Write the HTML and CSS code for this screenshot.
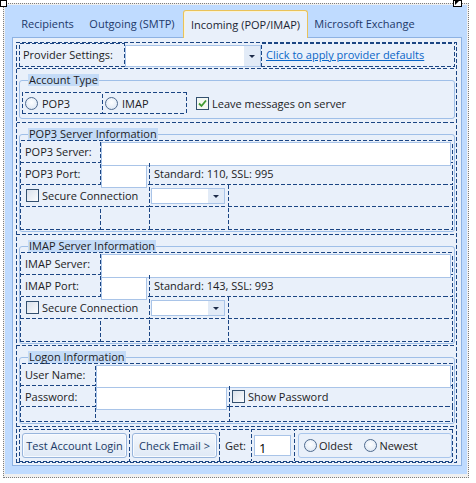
FILE: index.html
```html
<!DOCTYPE html>
<html lang="en">
<head>
    <meta charset="UTF-8">
    <title>Incoming (POP/IMAP)</title>
    <link rel="stylesheet" href="styles.css">
</head>
<body>
    <div class="surface">
        <span class="handle handle-tl"></span>
        <span class="handle handle-tr"><i></i></span>
        <div class="tabctl">
            <div class="tabstrip">
                <div class="tab tab-recipients">Recipients</div>
                <div class="tab tab-outgoing">Outgoing (SMTP)</div>
                <div class="tab tab-incoming active">Incoming (POP/IMAP)</div>
                <div class="tab tab-exchange">Microsoft Exchange</div>
            </div>
            <div class="page">
                <div class="layout dash">
                    <!-- provider -->
                    <div class="row row-provider dash">
                        <div class="provider-label dash">Provider Settings:</div>
                        <div class="combo combo-provider"><span class="combo-btn"><i></i></span></div>
                        <div class="provider-link dash"><a href="#">Click to apply provider defaults</a></div>
                    </div>

                    <!-- account type -->
                    <div class="row row-account dash">
                        <fieldset class="grp">
                            <legend>Account Type</legend>
                            <div class="acct-body">
                                <div class="opt-cell opt-pop dash"><span class="rad"></span>POP3</div>
                                <div class="opt-cell opt-imap dash"><span class="rad"></span>IMAP</div>
                                <div class="chk-line"><span class="chk checked"><svg width="11" height="11" viewBox="0 0 11 11"><path d="M2 5.5 L4.5 8 L9 2.5" fill="none" stroke="#3f9a2f" stroke-width="1.8"/></svg></span>Leave messages on server</div>
                            </div>
                        </fieldset>
                    </div>

                    <!-- pop3 -->
                    <div class="row row-pop dash">
                        <fieldset class="grp">
                            <legend>POP3 Server Information</legend>
                            <div class="srv-grid dash">
                                <div class="c dash">POP3 Server:</div>
                                <div class="c dash c-tb span3"><input class="tb tb-server" type="text"></div>
                                <div class="c dash">POP3 Port:</div>
                                <div class="c dash c-tb"><input class="tb tb-port" type="text"></div>
                                <div class="c dash span2">Standard: 110, SSL: 995</div>
                                <div class="c dash c-secure span2"><span class="chk"></span>Secure Connection</div>
                                <div class="c dash c-tb"><div class="combo combo-sm"><span class="combo-btn"><i></i></span></div></div>
                                <div class="c dash"></div>
                                <div class="c dash"></div>
                                <div class="c dash"></div>
                                <div class="c dash"></div>
                                <div class="c dash"></div>
                            </div>
                        </fieldset>
                    </div>

                    <!-- imap -->
                    <div class="row row-imap dash">
                        <fieldset class="grp">
                            <legend>IMAP Server Information</legend>
                            <div class="srv-grid dash">
                                <div class="c dash">IMAP Server:</div>
                                <div class="c dash c-tb span3"><input class="tb tb-server" type="text"></div>
                                <div class="c dash">IMAP Port:</div>
                                <div class="c dash c-tb"><input class="tb tb-port" type="text"></div>
                                <div class="c dash span2">Standard: 143, SSL: 993</div>
                                <div class="c dash c-secure span2"><span class="chk"></span>Secure Connection</div>
                                <div class="c dash c-tb"><div class="combo combo-sm"><span class="combo-btn"><i></i></span></div></div>
                                <div class="c dash"></div>
                                <div class="c dash"></div>
                                <div class="c dash"></div>
                                <div class="c dash"></div>
                                <div class="c dash"></div>
                            </div>
                        </fieldset>
                    </div>

                    <!-- logon -->
                    <div class="row row-logon dash">
                        <fieldset class="grp">
                            <legend>Logon Information</legend>
                            <div class="logon-grid dash">
                                <div class="c dash">User Name:</div>
                                <div class="c dash c-tb span2"><input class="tb tb-user" type="text"></div>
                                <div class="c dash">Password:</div>
                                <div class="c dash c-tb"><input class="tb tb-pass" type="password"></div>
                                <div class="c dash c-show"><span class="chk"></span>Show Password</div>
                                <div class="c dash"></div>
                                <div class="c dash"></div>
                                <div class="c dash"></div>
                            </div>
                        </fieldset>
                    </div>

                    <!-- actions -->
                    <div class="row row-actions">
                        <div class="btn-panel dash">
                            <div class="bc dash bc-test"><button class="btn btn-test" type="button">Test Account Login</button></div>
                            <div class="bc dash bc-check"><button class="btn btn-check" type="button">Check Email &gt;</button></div>
                            <div class="bc dash bc-get">Get:</div>
                            <div class="bc dash bc-count"><input class="tb tb-count" type="text" value="1"></div>
                            <div class="bc bc-order">
                                <div class="order-box">
                                    <span class="ropt"><span class="rad"></span>Oldest</span>
                                    <span class="ropt"><span class="rad"></span>Newest</span>
                                </div>
                            </div>
                        </div>
                    </div>
                </div>
            </div>
        </div>
    </div>
</body>
</html>
```

FILE: styles.css
```css
* {
    box-sizing: border-box;
}
body {
    margin: 0;
    background: #fff;
    font-family: "Open Sans", "Segoe UI", sans-serif;
    font-size: 11px;
    color: #1c1c24;
}
/* designer-style dashed outline, denser than the browser's dashed border */
.dash {
    border-color: #1b4583;
    border-style: solid;
    border-image: repeating-linear-gradient(45deg, #1b4583 0 2.83px, transparent 2.83px 4.243px) 1;
}
.surface {
    position: relative;
    margin: 3px 0 0 3px;
    width: 466px;
    height: 475px;
    border: 1px dotted #7d7d7d;
    padding: 1px;
    background: #f0f0f0;
}
.handle {
    position: absolute;
    top: -4px;
    height: 7px;
    background: #fff;
    border: 1px solid #000;
}
.handle-tl {
    left: -4px;
    width: 7px;
}
.handle-tr {
    left: 449px;
    width: 9px;
}
.handle-tr i {
    position: absolute;
    left: 1px;
    top: 0;
    border-left: 4px solid #000;
    border-bottom: 4px solid transparent;
}

/* tab control */
.tabctl {
    width: 462px;
    height: 469px;
    background: #bfdbff;
}
.tabstrip {
    display: flex;
    align-items: flex-end;
    height: 32px;
    padding-left: 9px;
}
.tab {
    height: 27px;
    line-height: 28px;
    text-align: center;
    color: #22396a;
    white-space: nowrap;
}
.tab-recipients { width: 67px; }
.tab-outgoing { width: 102px; }
.tab-incoming { width: 125px; }
.tab-exchange { width: 113px; }
.tab.active {
    position: relative;
    height: 28px;
    line-height: 27px;
    margin-bottom: -1px;
    background: #e9f0fa;
    border: 1px solid #e9c25a;
    border-bottom: 0;
    border-radius: 3px 3px 0 0;
    box-shadow: inset 1px 1px 0 #fbf3d6;
    color: #1a1f33;
}
.page {
    margin-left: 7px;
    width: 450px;
    height: 429px;
    background: #e9f0fa;
    border: 1px solid #8db2e3;
    padding: 4px 0 0 3px;
}

/* table layout panel */
.layout {
    width: 441px;
    border-width: 1px;
}
.row {
    display: flow-root;
    border-width: 0 0 1px 0;
}
.row-provider { height: 26px; display: flex; align-items: flex-start; padding-left: 2px; }
.row-account { height: 54px; }
.row-pop { height: 112px; }
.row-imap { height: 111px; }
.row-logon { height: 81px; }
.row-actions { height: 35px; }

.provider-label {
    width: 106px;
    height: 24px;
    border-width: 1px;
    padding-left: 3px;
    line-height: 22px;
    white-space: nowrap;
}
.provider-link {
    width: 194px;
    height: 24px;
    border-width: 1px;
    padding-left: 4px;
    line-height: 22px;
}
.provider-link a {
    color: #0a66c8;
}

.combo {
    position: relative;
    background: #fff;
    border: 1px solid #a9c4e8;
}
.combo-provider {
    width: 136px;
    height: 22px;
    margin-top: 2px;
}
.combo-btn {
    position: absolute;
    right: 0;
    top: 0;
    bottom: 0;
    width: 16px;
    background: #e2ebf7;
    display: flex;
    align-items: center;
    justify-content: center;
}
.combo-btn i {
    border-top: 3px solid #1c2b48;
    border-left: 3px solid transparent;
    border-right: 3px solid transparent;
}

/* group boxes */
.grp {
    margin: 5px 1px 0 2px;
    padding: 0;
    min-width: 0;
    border: 1px solid #9fbfe8;
    border-radius: 3px;
}
.grp legend {
    margin-left: 8px;
    padding: 0 1px;
    height: 12px;
    line-height: 12px;
    background: #c4dbf7;
    white-space: nowrap;
}

.acct-body {
    display: flex;
    align-items: center;
    margin: 6px 0 4px 2px;
}
.opt-cell {
    height: 22px;
    border-width: 1px;
    display: flex;
    align-items: center;
    padding-left: 2px;
}
.opt-pop { width: 81px; }
.opt-imap { width: 84px; border-left-width: 0; }
.chk-line {
    display: flex;
    align-items: center;
    margin-left: 9px;
}

.rad {
    display: inline-block;
    width: 13px;
    height: 13px;
    margin-right: 4px;
    border: 1px solid #4f6b8f;
    border-radius: 50%;
    background: radial-gradient(circle at 50% 40%, #fdfeff 0, #e7eef7 60%, #cfdced 100%);
    flex: none;
}
.chk {
    display: inline-flex;
    align-items: center;
    justify-content: center;
    width: 13px;
    height: 13px;
    margin-right: 3px;
    border: 1px solid #33506f;
    background: linear-gradient(135deg, #d9e1eb, #fbfcfe);
    flex: none;
}
.chk.checked {
    background: #f4f8f2;
}

/* server grids */
.srv-grid,
.logon-grid {
    display: grid;
    width: 433px;
    border-width: 1px 0 0 1px;
    margin-bottom: 1px;
}
.srv-grid {
    grid-template-columns: 80px 49px 79px 224px;
    grid-template-rows: 22px 22px 22px 23px;
}
.logon-grid {
    grid-template-columns: 75px 134px 223px;
    grid-template-rows: 22px 21px 15px;
}
.c {
    border-width: 0 1px 1px 0;
    display: flex;
    align-items: center;
    padding-left: 4px;
    white-space: nowrap;
}
.c-tb {
    padding-left: 0;
    align-items: flex-start;
}
.c-secure { padding-left: 5px; }
.c-show { padding-left: 2px; }
.span2 { grid-column: span 2; }
.span3 { grid-column: span 3; }

.tb {
    display: block;
    margin: 0;
    padding: 0 3px;
    border: 1px solid #a9c4e8;
    background: #fff;
    font: inherit;
    color: #000;
    flex: none;
}
.tb-server { width: 350px; height: 24px; margin-top: 1px; }
.tb-port { width: 46px; height: 23px; margin-top: 2px; }
.tb-user { width: 355px; height: 23px; margin-top: 1px; }
.tb-pass { width: 131px; height: 23px; margin-top: 1px; }
.combo-sm {
    width: 74px;
    height: 16px;
    margin: 3px 0 0 1px;
}

/* action buttons */
.btn-panel {
    display: flex;
    height: 33px;
    margin: 2px 3px 0 2px;
    border-width: 1px;
}
.bc {
    border-width: 0 1px 0 0;
    flex: none;
}
.bc-test { width: 110px; }
.bc-check { width: 90px; }
.bc-get { width: 32px; padding-left: 5px; display: flex; align-items: center; }
.bc-count { width: 43px; }
.bc-order { flex: 1; }
.btn {
    display: block;
    height: 25px;
    margin: 3px 0 0 2px;
    padding: 0;
    border: 1px solid #98b5dc;
    border-radius: 3px;
    background: linear-gradient(#f3f7fc, #dfe9f6);
    font: inherit;
    color: #203a66;
    box-shadow: inset 0 0 0 1px #f8fbff;
}
.btn-test { width: 105px; }
.btn-check { width: 85px; }
.tb-count {
    width: 37px;
    height: 21px;
    margin: 5px 0 0 2px;
    padding: 4px 0 0 4px;
    font-size: 13px;
    line-height: 15px;
}
.order-box {
    display: flex;
    align-items: center;
    width: 154px;
    height: 25px;
    margin: 3px 0 0 3px;
    padding-left: 5px;
    border: 1px solid #a9c6ec;
    border-radius: 3px;
}
.ropt {
    display: flex;
    align-items: center;
    margin-right: 12px;
}
.ropt .rad {
    margin-right: 2px;
}
```
